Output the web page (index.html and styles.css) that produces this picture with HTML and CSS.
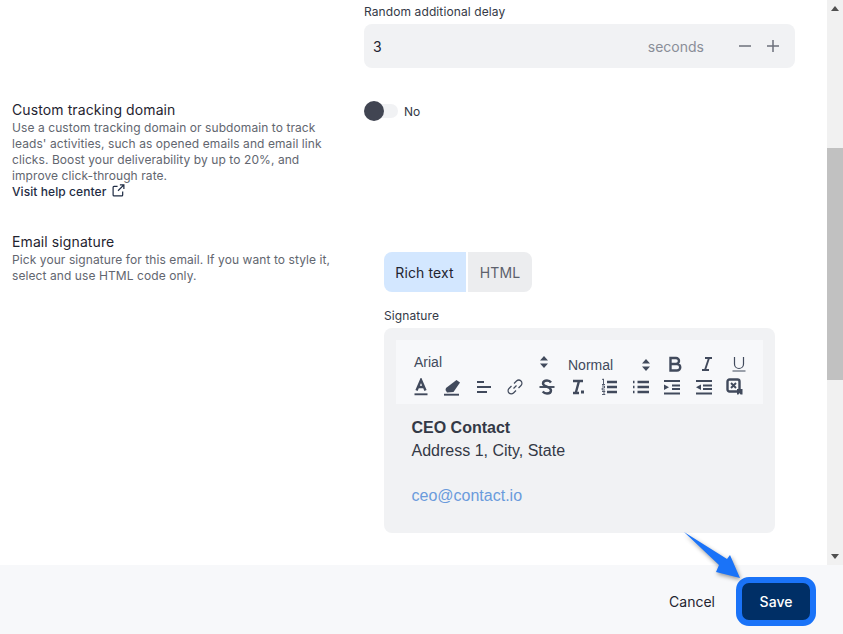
FILE: index.html
```html
<!DOCTYPE html>
<html lang="en">
<head>
<meta charset="utf-8">
<title>Email settings</title>
<link rel="stylesheet" href="styles.css">
</head>
<body>
<div class="main">
  <div class="content">
    <section class="row row-delay">
      <div class="side"></div>
      <div class="field">
        <label class="field-label">Random additional delay</label>
        <div class="stepper">
          <span class="stepper-value">3</span>
          <span class="stepper-unit">seconds</span>
          <svg class="step-icon" viewBox="0 0 14 14"><path d="M1 7h12"/></svg>
          <svg class="step-icon" viewBox="0 0 14 14"><path d="M1 7h12M7 1v12"/></svg>
        </div>
      </div>
    </section>
    <section class="row row-tracking">
      <div class="side">
        <h3 class="title">Custom tracking domain</h3>
        <p class="desc">Use a custom tracking domain or subdomain to track leads' activities, such as opened emails and email link clicks. Boost your deliverability by up to 20%, and improve click-through rate.</p>
        <a class="help" href="#">Visit help center
          <svg class="ext" viewBox="0 0 14 14"><path d="M6 2.500H2.200a1 1 0 0 0-1 1v8.300a1 1 0 0 0 1 1h8.300a1 1 0 0 0 1-1V8M8.500 1h4.300v4.300M12.800 1 6.500 7.300"/></svg>
        </a>
      </div>
      <div class="toggle-wrap">
        <span class="toggle"><span class="knob"></span></span>
        <span class="toggle-text">No</span>
      </div>
    </section>
    <section class="row row-signature">
      <div class="side side-signature">
        <h3 class="title">Email signature</h3>
        <p class="desc">Pick your signature for this email. If you want to style it, select and use HTML code only.</p>
      </div>
      <div class="sig">
        <div class="tabs">
          <span class="tab tab-active">Rich text</span>
          <span class="tab tab-idle">HTML</span>
        </div>
        <label class="field-label sig-label">Signature</label>
        <div class="editor">
          <div class="toolbar">
            <div class="tool-row tool-row-top">
              <span class="picker picker-font">Arial
                <svg class="updown" viewBox="0 0 8 12"><path d="M4 0 8 4.500H0zM4 12 0 7.500h8z"/></svg>
              </span>
              <span class="picker picker-size">Normal
                <svg class="updown" viewBox="0 0 8 12"><path d="M4 0 8 4.500H0zM4 12 0 7.500h8z"/></svg>
              </span>
              <svg class="tool" viewBox="0 0 18 18"><path class="bold" d="M4.500 3h5.500a3 3 0 0 1 0 6H4.500zM4.500 9h6.500a3.200 3.200 0 0 1 0 6.500H4.500z"/></svg>
              <svg class="tool" viewBox="0 0 18 18"><path class="thick" d="M7 3h7M4 15h7M11 3 7 15"/></svg>
              <svg class="tool" viewBox="0 0 18 18"><path d="M4.500 2v7a4.500 4.500 0 0 0 9 0V2M2.500 16h13"/></svg>
            </div>
            <div class="tool-row">
              <svg class="tool" viewBox="0 0 18 18"><path class="bold" d="M4.500 12.500 9 2l4.500 10.500M6 9h6"/><path class="thick" d="M2.500 16.300h13"/></svg>
              <svg class="tool" viewBox="0 0 18 18"><path class="fill" d="M13.500 2 17 4.500 10.500 14 4 14.500 2.500 12 3 10z"/><path class="thick" d="M1 16.700h15"/></svg>
              <svg class="tool" viewBox="0 0 18 18"><path class="thick" d="M2 4h7M2 9h14M2 14h10"/></svg>
              <svg class="tool" viewBox="0 0 18 18"><path d="M7.500 10.500 10.500 7.500M8 5.500l2.500-2.500a3 3 0 0 1 4.500 4.500L12.500 10M10 12.500l-2.500 2.500a3 3 0 0 1-4.500-4.500L5.500 8"/></svg>
              <svg class="tool" viewBox="0 0 18 18"><path class="bold" d="M13 4.500C12 3 10.500 2.500 9 2.500c-2.500 0-4 1.200-4 3 0 3.500 8 3 8 7 0 1.800-1.700 3-4 3-1.700 0-3.200-.6-4.300-2"/><path class="thick" d="M1.500 9h15"/></svg>
              <svg class="tool" viewBox="0 0 18 18"><path class="bold" d="M4 3h10M10 3 7 14M4 15h6"/><path class="fill" d="M12 12.500h3v3h-3z"/></svg>
              <svg class="tool" viewBox="0 0 18 18"><path class="bold" d="M7 4h10M7 9h10M7 14h10"/><path class="thin" d="M2 1.500 3.500 1v5M2 6.500h3M2 8h2.500v2H2.200v2H5M2 13.500h3l-1.500 1.500 1.500 1.500H2"/></svg>
              <svg class="tool" viewBox="0 0 18 18"><path class="bold" d="M5.500 4H17M5.500 9H17M5.500 14H17M1 4h1.500M1 9h1.500M1 14h1.500"/></svg>
              <svg class="tool" viewBox="0 0 18 18"><path class="thick" d="M1 3h16M9 7.500h8M9 11h8M1 15.500h16"/><path class="fill" d="M1 6.500 6 9.300 1 12z"/></svg>
              <svg class="tool" viewBox="0 0 18 18"><path class="thick" d="M1 3h16M1 15.500h16M8 7.500h9M8 11h9"/><path class="fill" d="M6 6.500 1 9.300 6 12z"/></svg>
              <svg class="tool" viewBox="0 0 18 18"><rect class="bold" x="1.500" y="1.500" width="12" height="12" rx="2"/><path class="thick" d="M5 5l5 5M10 5l-5 5"/><path class="fill" d="M11 11h5.500v5.500h-2l-1-1.500-1 1.500H11z"/></svg>
            </div>
          </div>
          <div class="sig-body">
            <div class="sig-name">CEO Contact</div>
            <div>Address 1, City, State</div>
            <div class="sig-gap"></div>
            <a class="sig-mail" href="#">ceo@contact.io</a>
          </div>
        </div>
      </div>
    </section>
  </div>
  <div class="scrollbar">
    <span class="sb-arrow sb-up"></span>
    <div class="sb-track"><div class="sb-thumb"></div></div>
    <span class="sb-arrow sb-down"></span>
  </div>
</div>
<footer class="footer">
  <button class="btn-cancel" type="button">Cancel</button>
  <button class="btn-save" type="button">Save</button>
</footer>
<svg class="pointer" viewBox="0 0 70 60"><path d="M4 2 47 29 50 25 60 48 36 42 39 35z"/></svg>
</body>
</html>
```
FILE: styles.css
```css
* { box-sizing: border-box; }
html, body { margin: 0; height: 100%; }
body {
  width: 843px;
  height: 634px;
  overflow: hidden;
  display: flex;
  flex-direction: column;
  position: relative;
  background: #fff;
  font-family: "Inter", "Liberation Sans", sans-serif;
  color: #1f2430;
}
.main { height: 565px; display: flex; flex: none; }
.content { width: 827px; flex: none; overflow: hidden; }
.row { display: flex; padding-left: 12px; }
.side { width: 352px; flex: none; padding-right: 20px; }
.side-signature { margin-top: -2px; }
.row-delay { height: 102px; padding-top: 4px; }
.row-tracking { height: 134px; }
.field { width: 431px; }
.field-label { display: block; font-size: 12px; line-height: 16px; color: #343946; letter-spacing: .1px; }
.stepper {
  height: 44px;
  margin-top: 4px;
  background: #f1f2f4;
  border-radius: 8px;
  display: flex;
  align-items: center;
  padding: 0 15px 0 9px;
}
.stepper-value { flex: 1; font-size: 14px; color: #1f2430; }
.stepper-unit { font-size: 14px; color: #8a8e98; margin-right: 34px; }
.step-icon { width: 14px; height: 14px; fill: none; stroke: #6c707b; stroke-width: 1.500; margin-left: 14px; }
.step-icon:first-of-type { margin-left: 0; }
.title { margin: -1px 0 1px; font-size: 14px; line-height: 18px; font-weight: 400; color: #1f2430; letter-spacing: .1px; }
.desc { margin: 0; width: 320px; font-size: 12px; line-height: 16px; color: #62666f; letter-spacing: .08px; }
.help { display: flex; align-items: center; gap: 6px; font-size: 12px; line-height: 15px; font-weight: 500; color: #1f2c44; text-decoration: none; letter-spacing: .08px; }
.ext { width: 13px; height: 13px; fill: none; stroke: #1f2c44; stroke-width: 1.300; margin-top: -3px; }
.toggle-wrap { display: flex; align-items: center; height: 20px; margin-top: -1px; gap: 6px; }
.toggle { display: block; width: 34px; height: 14px; background: #f1f2f4; border-radius: 7px; position: relative; }
.knob { position: absolute; left: 0; top: -3px; width: 20px; height: 20px; border-radius: 50%; background: #414552; }
.toggle-text { font-size: 12px; color: #343946; }
.sig { width: 391px; margin-left: 20px; padding-top: 16px; }
.tabs { display: flex; gap: 2px; height: 40px; }
.tab { display: flex; align-items: center; justify-content: center; font-size: 14px; letter-spacing: .1px; }
.tab-active { width: 82px; background: #d3e7ff; border-radius: 8px 0 0 8px; color: #1f2430; padding-right: 1px; }
.tab-idle { width: 64px; background: #ecedef; border-radius: 0 8px 8px 0; color: #5d616c; }
.sig-label { margin-top: 16px; }
.editor { height: 205px; margin-top: 4px; background: #f1f2f4; border-radius: 8px; padding: 12px; }
.toolbar { height: 64px; background: #f7f8fa; padding-top: 12px; }
.tool-row { display: flex; align-items: center; height: 23px; padding-left: 16px; }
.tool-row .tool { width: 18px; height: 18px; margin-right: 13.400px; flex: none; }
.tool-row-top .tool { margin-right: 14px; }
.tool { fill: none; stroke: #414a5c; stroke-width: 1.200; }
.tool .thick { stroke-width: 1.900; }
.tool .bold { stroke-width: 2.400; }
.tool .thin { stroke-width: .9; }
.tool .fill { fill: #414a5c; stroke: none; }
.picker { display: flex; justify-content: space-between; font-size: 14px; color: #414a5c; font-family: "Liberation Sans", sans-serif; flex: none; align-items: center; }
.picker-font { width: 134px; margin-left: 2px; margin-top: -4px; margin-right: 20px; }
.picker-size { width: 82px; margin-right: 16px; margin-top: 2px; }
.updown { width: 8px; height: 12px; fill: #414a5c; }
.sig-body { padding: 12px 15.500px 0; font-family: "Liberation Sans", sans-serif; font-size: 16px; line-height: 23px; color: #343946; }
.sig-name { font-weight: 700; }
.sig-gap { height: 22px; }
.sig-mail { color: #6a9bdc; text-decoration: none; }
.scrollbar { width: 16px; flex: none; background: #f1f1f1; display: flex; flex-direction: column; align-items: center; }
.sb-track { flex: 1; width: 100%; padding-top: 132px; }
.sb-thumb { height: 232px; background: #c1c1c1; }
.sb-arrow { flex: none; width: 0; height: 0; border-left: 4px solid transparent; border-right: 4px solid transparent; }
.sb-up { border-bottom: 5px solid #505050; margin: 6px 0 5px; }
.sb-down { border-top: 5px solid #505050; margin: 5px 0 6px; }
.footer {
  flex: 1;
  background: #f7f8fa;
  display: flex;
  align-items: center;
  justify-content: flex-end;
  padding: 4px 27px 0 0;
}
.btn-cancel { background: none; border: 0; padding: 0; margin-right: 21px; font: 400 14px "Inter", sans-serif; color: #1f2430; }
.btn-save {
  width: 80px;
  height: 49px;
  border: 6px solid #1a73f8;
  border-radius: 13px;
  background: #002f66;
  color: #fff;
  font: 500 14px "Inter", sans-serif;
}
.pointer {
  position: absolute;
  left: 680px;
  top: 530px;
  width: 70px;
  height: 60px;
  fill: #1a73f8;
  filter: drop-shadow(1px 2px 2px rgba(0,0,0,.4));
}
```
